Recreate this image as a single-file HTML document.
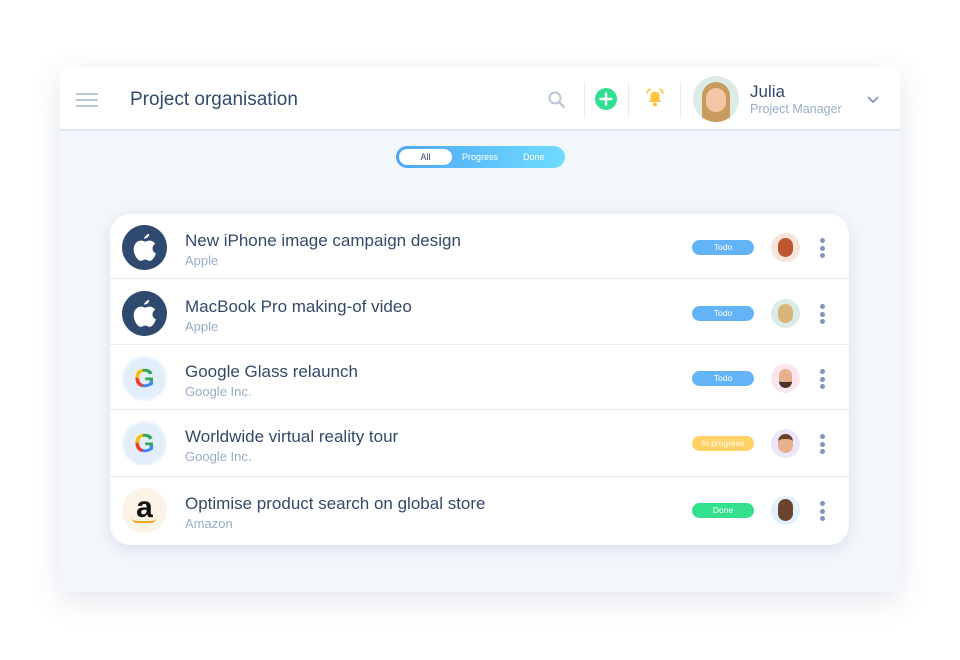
<!DOCTYPE html>
<html><head><style>
*{margin:0;padding:0;box-sizing:border-box}
body{width:960px;height:660px;background:#fff;font-family:"Liberation Sans",sans-serif;position:relative;overflow:hidden}
.win{position:absolute;left:60px;top:67px;width:840px;height:525px;background:#f3f7fc;border-radius:6px;box-shadow:0 8px 30px rgba(40,60,100,.13);overflow:hidden}
.hdr{position:absolute;left:0;top:0;width:840px;height:64px;background:#fff;border-bottom:2px solid #dfe9f5}
.title{position:absolute;left:70px;top:22px;font-size:19px;color:#2f4a6e}
.sep{position:absolute;top:15px;width:1px;height:36px;background:#e3ecf6}
.card{position:absolute;left:50px;top:147px;width:739px;height:331px;background:#fff;border-radius:20px;box-shadow:0 4px 14px rgba(40,60,100,.12)}
.row{position:absolute;left:0;width:739px;height:65px;border-bottom:1.5px solid #e6edf5}
.logo{position:absolute;left:12px;top:11px;width:45px;height:45px;border-radius:50%}
.t{position:absolute;left:75px;top:17px;font-size:17px;color:#34496a}
.s{position:absolute;left:75px;top:39px;font-size:13px;color:#98acc9}
.pill{position:absolute;left:582px;top:26px;width:62px;height:15px;border-radius:8px;font-size:8.5px;color:#fff;text-align:center;line-height:15px}
.av{position:absolute;left:661px;top:19px;width:29px;height:29px;border-radius:50%}
.dots{position:absolute;left:710px;top:24px;width:5px}
.dots i{display:block;width:5px;height:5px;border-radius:50%;background:#7f95bb;margin-bottom:2.5px}
.g{text-align:center;line-height:41px;font-size:26px;font-weight:bold;background:conic-gradient(from 200deg at 50% 55%,#ea4335 0 90deg,#fbbc05 90deg 150deg,#34a853 150deg 250deg,#4285f4 250deg 360deg);-webkit-background-clip:text;background-clip:text;color:transparent}
</style></head><body>
<div class="win">
 <div class="hdr">
  <div style="position:absolute;left:16px;top:26px;width:22px;height:2px;background:#b9c7d9;box-shadow:0 6px 0 #b9c7d9,0 12px 0 #b9c7d9"></div>
  <div class="title">Project organisation</div>
  <svg style="position:absolute;left:488px;top:24px" width="18" height="18" viewBox="0 0 18 18"><circle cx="7" cy="7" r="5.5" fill="none" stroke="#b9c5d6" stroke-width="2"/><line x1="11" y1="11" x2="16" y2="16" stroke="#b9c5d6" stroke-width="2.2" stroke-linecap="round"/></svg>
  <div class="sep" style="left:524px"></div>
  <svg style="position:absolute;left:535px;top:21px" width="22" height="22"><circle cx="11" cy="11" r="11" fill="#2ee08f"/><path d="M11 5.5v11M5.5 11h11" stroke="#fff" stroke-width="2.4" stroke-linecap="round"/></svg>
  <div class="sep" style="left:568px"></div>
  <svg style="position:absolute;left:584px;top:20px" width="22" height="22" viewBox="0 0 22 22"><path d="M5 15c1.5-1.5 1.5-3 1.5-6a4.5 4.5 0 019 0c0 3 0 4.5 1.5 6z" fill="#ffc43a"/><circle cx="11" cy="17.5" r="2" fill="#ffc43a"/><path d="M3 6a7 7 0 013-4M19 6a7 7 0 00-3-4" stroke="#ffc43a" stroke-width="1.6" fill="none" stroke-linecap="round"/></svg>
  <div class="sep" style="left:620px"></div>
  <div style="position:absolute;left:633px;top:9px;width:46px;height:46px;border-radius:50%;background:#dcebe6;overflow:hidden"><div style="position:absolute;left:9px;top:6px;width:28px;height:40px;border-radius:14px 14px 6px 6px;background:#c99a5e"></div><div style="position:absolute;left:13px;top:12px;width:20px;height:24px;border-radius:10px;background:#f3c6a4"></div></div>
  <div style="position:absolute;left:690px;top:15px;font-size:17px;color:#34496a">Julia</div>
  <div style="position:absolute;left:690px;top:35px;font-size:12.5px;color:#98acc9">Project Manager</div>
  <svg style="position:absolute;left:806px;top:28px" width="14" height="9"><path d="M2 2l5 5 5-5" stroke="#7f95bb" stroke-width="1.8" fill="none"/></svg>
 </div>
 <div style="position:absolute;left:336px;top:79px;width:169px;height:22px;border-radius:11px;background:linear-gradient(90deg,#4da6f5,#70dcff)">
  <div style="position:absolute;left:3px;top:3px;width:53px;height:16px;border-radius:8px;background:#fff;font-size:9px;color:#34496a;text-align:center;line-height:16px">All</div>
  <div style="position:absolute;left:66px;top:6px;font-size:9px;color:#fff">Progress</div>
  <div style="position:absolute;left:127px;top:6px;font-size:9px;color:#fff">Done</div>
 </div>
 <div class="card">
  <div class="row" style="top:0">
   <svg class="logo" viewBox="0 0 45 45" style="background:#2f4a6e"><g transform="translate(22.5 23) scale(1.35) translate(-23 -22)"><path d="M22.5 15c1-2.5 3-3.5 4-3.5 0 2-1.5 3.5-4 3.5zM15 23c0-4.5 3-6.5 5.5-6.5 1.5 0 2.5.8 3 .8s1.7-.8 3.2-.8c1.3 0 3.2.6 4.3 2.3-3 1.8-2.6 6 .5 7.2-.8 2.4-2.7 5.5-4.5 5.5-1.5 0-2-.9-3.5-.9s-2 .9-3.4.9C18 31.5 15 27 15 23z" fill="#fff"/></g></svg>
   <div class="t">New iPhone image campaign design</div><div class="s">Apple</div>
   <div class="pill" style="background:#63b3f7">Todo</div>
   <div class="av" style="background:#f7e4dc"><div style="margin:5px 7px;width:15px;height:19px;border-radius:8px;background:#c0562f"></div></div>
   <div class="dots"><i></i><i></i><i></i></div>
  </div>
  <div class="row" style="top:66px">
   <svg class="logo" viewBox="0 0 45 45" style="background:#2f4a6e"><g transform="translate(22.5 23) scale(1.35) translate(-23 -22)"><path d="M22.5 15c1-2.5 3-3.5 4-3.5 0 2-1.5 3.5-4 3.5zM15 23c0-4.5 3-6.5 5.5-6.5 1.5 0 2.5.8 3 .8s1.7-.8 3.2-.8c1.3 0 3.2.6 4.3 2.3-3 1.8-2.6 6 .5 7.2-.8 2.4-2.7 5.5-4.5 5.5-1.5 0-2-.9-3.5-.9s-2 .9-3.4.9C18 31.5 15 27 15 23z" fill="#fff"/></g></svg>
   <div class="t">MacBook Pro making-of video</div><div class="s">Apple</div>
   <div class="pill" style="background:#63b3f7">Todo</div>
   <div class="av" style="background:#dcebe6"><div style="margin:5px 7px;width:15px;height:19px;border-radius:8px;background:#d9b57a"></div></div>
   <div class="dots"><i></i><i></i><i></i></div>
  </div>
  <div class="row" style="top:131px">
   <div class="logo" style="background:#e3eefc;border:2px solid #eef4fd"><div class="g">G</div></div>
   <div class="t">Google Glass relaunch</div><div class="s">Google Inc.</div>
   <div class="pill" style="background:#63b3f7">Todo</div>
   <div class="av" style="background:#fce6ee"><div style="margin:5px 8px;width:13px;height:19px;border-radius:7px;background:#e8b08e;border-bottom:6px solid #4a3328"></div></div>
   <div class="dots"><i></i><i></i><i></i></div>
  </div>
  <div class="row" style="top:196px;height:67px">
   <div class="logo" style="background:#e3eefc;border:2px solid #eef4fd"><div class="g">G</div></div>
   <div class="t">Worldwide virtual reality tour</div><div class="s">Google Inc.</div>
   <div class="pill" style="background:#ffd166">In progress</div>
   <div class="av" style="background:#ece6fb"><div style="margin:5px 7px;width:15px;height:19px;border-radius:8px;background:#e8b08e;border-top:5px solid #6a3f2c"></div></div>
   <div class="dots"><i></i><i></i><i></i></div>
  </div>
  <div class="row" style="top:263px;height:68px;border:none">
   <div class="logo" style="background:#fbf3e6;text-align:center;line-height:40px;font-size:30px;font-weight:bold;color:#111">a<div style="position:absolute;left:10px;top:30px;width:24px;height:5px;border-bottom:2.5px solid #f7a21a;border-radius:0 0 12px 12px"></div></div>
   <div class="t">Optimise product search on global store</div><div class="s">Amazon</div>
   <div class="pill" style="background:#33e08e">Done</div>
   <div class="av" style="background:#e3f1fc"><div style="margin:3px 7px;width:15px;height:22px;border-radius:8px;background:#6b4430"></div></div>
   <div class="dots"><i></i><i></i><i></i></div>
  </div>
 </div>
</div>
</body></html>
